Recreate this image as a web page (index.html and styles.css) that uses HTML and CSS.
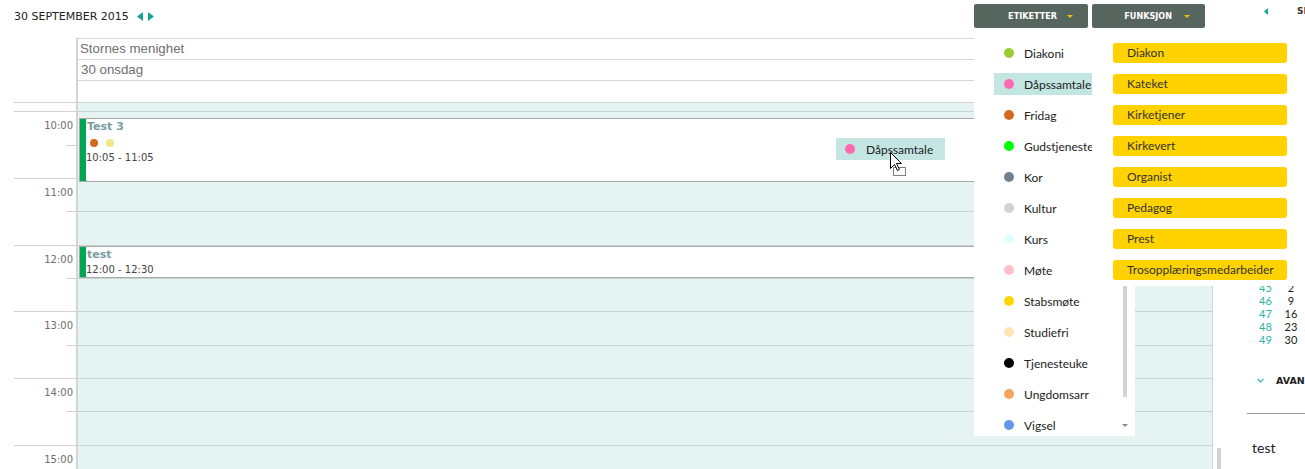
FILE: index.html
```html
<!DOCTYPE html>
<html lang="no">
<head>
<meta charset="utf-8">
<title>Kalender – Stornes menighet</title>
<link rel="stylesheet" href="styles.css">
</head>
<body>
<div class="app">
  <main class="main">
    <header class="toolbar">
      <div class="title">
        <span class="date">30 SEPTEMBER 2015</span>
        <span class="nav">
          <svg width="6" height="9" viewBox="0 0 6 9"><path d="M6 0V9L0 4.5Z"/></svg>
          <svg width="6" height="9" viewBox="0 0 6 9"><path d="M0 0V9L6 4.5Z"/></svg>
        </span>
      </div>
      <div class="menus">
        <button class="menu-btn">ETIKETTER <span class="caret"></span></button>
        <button class="menu-btn second">FUNKSJON <span class="caret"></span></button>

        <div class="menu-panel tags-panel">
          <div class="tag-item"><i class="dot c-yellowgreen"></i>Diakoni</div>
          <div class="tag-item active"><i class="dot c-hotpink"></i>Dåpssamtale</div>
          <div class="tag-item"><i class="dot c-chocolate"></i>Fridag</div>
          <div class="tag-item"><i class="dot c-lime"></i>Gudstjeneste</div>
          <div class="tag-item"><i class="dot c-slategray"></i>Kor</div>
          <div class="tag-item"><i class="dot c-lightgray"></i>Kultur</div>
          <div class="tag-item"><i class="dot c-lightcyan"></i>Kurs</div>
          <div class="tag-item"><i class="dot c-pink"></i>Møte</div>
          <div class="tag-item"><i class="dot c-gold"></i>Stabsmøte</div>
          <div class="tag-item"><i class="dot c-moccasin"></i>Studiefri</div>
          <div class="tag-item"><i class="dot c-black"></i>Tjenesteuke</div>
          <div class="tag-item"><i class="dot c-sandybrown"></i>Ungdomsarr</div>
          <div class="tag-item"><i class="dot c-cornflower"></i>Vigsel</div>
          <div class="tags-scroll"></div>
          <div class="tags-down"></div>
        </div>

        <div class="menu-panel func-panel">
          <div class="role">Diakon</div>
          <div class="role">Kateket</div>
          <div class="role">Kirketjener</div>
          <div class="role">Kirkevert</div>
          <div class="role">Organist</div>
          <div class="role">Pedagog</div>
          <div class="role">Prest</div>
          <div class="role">Trosopplæringsmedarbeider</div>
        </div>
      </div>
    </header>

    <div class="cal">
      <div class="times">
        <div class="times-head"></div>
        <div class="slots">
          <div class="t-slot"></div>
          <div class="t-slot">10:00</div>
          <div class="t-slot half"></div>
          <div class="t-slot">11:00</div>
          <div class="t-slot half"></div>
          <div class="t-slot">12:00</div>
          <div class="t-slot half"></div>
          <div class="t-slot">13:00</div>
          <div class="t-slot half"></div>
          <div class="t-slot">14:00</div>
          <div class="t-slot half"></div>
          <div class="t-slot">15:00</div>
        </div>
      </div>

      <div class="day">
        <div class="day-head">
          <div class="dh-row">Stornes menighet</div>
          <div class="dh-row date-row">30 onsdag</div>
          <div class="dh-row blank"></div>
        </div>
        <div class="day-body slots">
          <div class="d-slot first"></div>
          <div class="d-slot"></div>
          <div class="d-slot"></div>
          <div class="d-slot"></div>
          <div class="d-slot"></div>
          <div class="d-slot"></div>
          <div class="d-slot"></div>
          <div class="d-slot"></div>
          <div class="d-slot"></div>
          <div class="d-slot"></div>
          <div class="d-slot"></div>
          <div class="d-slot"></div>

          <div class="event" style="top:16px;height:64px">
            <span class="bar"></span>
            <div class="ev-body">
              <div class="ev-title">Test 3</div>
              <div class="ev-dots"><i class="c-chocolate"></i><i class="c-khaki"></i></div>
              <div class="ev-time">10:05 - 11:05</div>
            </div>
          </div>

          <div class="event short" style="top:144px;height:32px">
            <span class="bar"></span>
            <div class="ev-body">
              <div class="ev-title">test</div>
              <div class="ev-time">12:00 - 12:30</div>
            </div>
          </div>

          <div class="ghost"><i class="dot c-hotpink"></i>Dåpssamtale</div>
          <svg class="cursor" width="18" height="26" viewBox="0 0 18 26">
            <rect x="3.5" y="15.5" width="12" height="8" fill="#fff" stroke="#000" stroke-dasharray="1 1"/>
            <path d="M0.5 0.5V16.5L4.5 12.5L7.5 18.5L9.5 17.5L6.5 11.5H11.5Z" fill="#fff" stroke="#000" stroke-linejoin="round"/>
          </svg>
        </div>
      </div>
    </div>
  </main>

  <aside class="side">
    <div class="side-head">
      <svg width="4" height="7" viewBox="0 0 4 7"><path d="M4 0V7L0 3.5Z"/></svg>
      <b>SEPTEMBER 2015</b>
    </div>

    <div class="month first">
      <table>
        <tr class="wd"><td class="wk"></td><td>M</td><td>T</td><td>O</td><td>T</td><td>F</td><td>L</td><td>S</td></tr>
        <tr><td class="wk">36</td><td>31</td><td>1</td><td>2</td><td>3</td><td>4</td><td>5</td><td>6</td></tr>
        <tr><td class="wk">37</td><td>7</td><td>8</td><td>9</td><td>10</td><td>11</td><td>12</td><td>13</td></tr>
        <tr><td class="wk">38</td><td>14</td><td>15</td><td>16</td><td>17</td><td>18</td><td>19</td><td>20</td></tr>
        <tr><td class="wk">39</td><td>21</td><td>22</td><td>23</td><td>24</td><td>25</td><td>26</td><td>27</td></tr>
        <tr><td class="wk">40</td><td>28</td><td>29</td><td>30</td><td>1</td><td>2</td><td>3</td><td>4</td></tr>
      </table>
    </div>
    <div class="month">
      <div class="m-title">OKTOBER 2015</div>
      <table>
        <tr class="wd"><td class="wk"></td><td>M</td><td>T</td><td>O</td><td>T</td><td>F</td><td>L</td><td>S</td></tr>
        <tr><td class="wk">40</td><td>28</td><td>29</td><td>30</td><td>1</td><td>2</td><td>3</td><td>4</td></tr>
        <tr><td class="wk">41</td><td>5</td><td>6</td><td>7</td><td>8</td><td>9</td><td>10</td><td>11</td></tr>
        <tr><td class="wk">42</td><td>12</td><td>13</td><td>14</td><td>15</td><td>16</td><td>17</td><td>18</td></tr>
        <tr><td class="wk">43</td><td>19</td><td>20</td><td>21</td><td>22</td><td>23</td><td>24</td><td>25</td></tr>
        <tr><td class="wk">44</td><td>26</td><td>27</td><td>28</td><td>29</td><td>30</td><td>31</td><td>1</td></tr>
      </table>
    </div>
    <div class="month">
      <div class="m-title">NOVEMBER 2015</div>
      <table>
        <tr class="wd"><td class="wk"></td><td>M</td><td>T</td><td>O</td><td>T</td><td>F</td><td>L</td><td>S</td></tr>
        <tr><td class="wk">44</td><td>26</td><td>27</td><td>28</td><td>29</td><td>30</td><td>31</td><td>1</td></tr>
        <tr><td class="wk">45</td><td>2</td><td>3</td><td>4</td><td>5</td><td>6</td><td>7</td><td>8</td></tr>
        <tr><td class="wk">46</td><td>9</td><td>10</td><td>11</td><td>12</td><td>13</td><td>14</td><td>15</td></tr>
        <tr><td class="wk">47</td><td>16</td><td>17</td><td>18</td><td>19</td><td>20</td><td>21</td><td>22</td></tr>
        <tr><td class="wk">48</td><td>23</td><td>24</td><td>25</td><td>26</td><td>27</td><td>28</td><td>29</td></tr>
        <tr><td class="wk">49</td><td>30</td><td>1</td><td>2</td><td>3</td><td>4</td><td>5</td><td>6</td></tr>
      </table>
    </div>

    <section class="adv">
      <div class="adv-head">
        <svg width="7" height="5" viewBox="0 0 7 5"><path d="M0.5 0.8L3.5 3.8L6.5 0.8" fill="none" stroke="#2fb0a6" stroke-width="1.2"/></svg>
        <b>AVANSERT</b>
      </div>
    </section>
    <div class="note">test</div>
    <div class="side-scroll"></div>
  </aside>
</div>
</body>
</html>
```

FILE: styles.css
```css
* { box-sizing: border-box; margin: 0; padding: 0; }

body {
  width: 1305px;
  height: 469px;
  overflow: hidden;
  background: #fff;
  color: #222;
  font-family: "DejaVu Sans", Verdana, sans-serif;
  font-size: 11px;
}

.app { display: flex; height: 469px; }

/* ---------- main column ---------- */
.main {
  width: 1213px;
  flex: none;
  display: flex;
  flex-direction: column;
}

.toolbar {
  height: 38px;
  flex: none;
  display: flex;
  justify-content: space-between;
  align-items: flex-start;
  padding: 4px 8px 0 14px;
  position: relative;
  z-index: 5;
}

.title { display: flex; align-items: center; gap: 8px; height: 24px; }
.date { font-size: 11px; color: #222; }
.nav { display: flex; align-items: center; gap: 5px; }
.nav svg { display: block; fill: #17a493; }

.menus { display: flex; gap: 4px; position: relative; }

.menu-btn {
  width: 114px;
  height: 24px;
  border: 0;
  border-radius: 2px;
  background: #57655f;
  color: #fff;
  font-family: "DejaVu Sans Condensed", "DejaVu Sans", sans-serif;
  font-stretch: condensed;
  font-weight: bold;
  font-size: 9px;
  display: flex;
  align-items: center;
  justify-content: flex-end;
  gap: 10px;
  padding-right: 15px;
}
.menu-btn.second { width: 113px; gap: 12px; }

.caret {
  width: 0;
  height: 0;
  border-left: 3px solid transparent;
  border-right: 3px solid transparent;
  border-top: 3px solid #f1c400;
}

/* dropdown panels */
.menu-panel {
  position: absolute;
  top: 27px;
  background: #fff;
  overflow: hidden;
}

.tags-panel {
  left: 0;
  width: 161px;
  height: 405px;
  padding-top: 11px;
  z-index: 1;
}

.tag-item {
  display: flex;
  align-items: center;
  gap: 10px;
  width: fit-content;
  height: 22px;
  margin: 0 0 9px 20px;
  padding: 0 1px 0 10px;
  font-family: Lato, "Liberation Sans", sans-serif;
  font-size: 12px;
  color: #222;
}
.tag-item.active { background: #c3e6e3; }

.dot {
  width: 10px;
  height: 10px;
  border-radius: 50%;
  flex: none;
}

.tags-scroll {
  position: absolute;
  left: 149px;
  top: 9px;
  width: 4px;
  height: 357px;
  background: #d3d3d3;
}
.tags-down {
  position: absolute;
  left: 148px;
  top: 393px;
  width: 0;
  height: 0;
  border-left: 3px solid transparent;
  border-right: 3px solid transparent;
  border-top: 3px solid #8a8a8a;
}

.func-panel {
  left: 118px;
  width: 213px;
  height: 255px;
  padding: 12px 0 0 21px;
  z-index: 2;
}

.role {
  width: 174px;
  height: 20px;
  line-height: 20px;
  margin-bottom: 11px;
  padding-left: 14px;
  background: #ffd200;
  border-radius: 3px;
  font-family: Lato, "Liberation Sans", sans-serif;
  font-size: 12px;
  color: #333;
  white-space: nowrap;
}

/* colours */
.c-yellowgreen { background: #9acd32; }
.c-hotpink { background: #ff69b4; }
.c-chocolate { background: #d2691e; }
.c-lime { background: #00ff00; }
.c-slategray { background: #708090; }
.c-lightgray { background: #d3d3d3; }
.c-lightcyan { background: #e0ffff; }
.c-pink { background: #ffc0cb; }
.c-gold { background: #ffd700; }
.c-moccasin { background: #ffe4b5; }
.c-black { background: #000; }
.c-sandybrown { background: #f4a460; }
.c-cornflower { background: #6495ed; }
.c-khaki { background: #f0e68c; }

/* ---------- calendar ---------- */
.cal { flex: 1; display: flex; overflow: hidden; }

.slots {
  display: grid;
  grid-template-rows: 9px 34px 33px 33px 34px 33px 33px 34px 33px 33px 34px 33px;
}

.times { width: 76px; flex: none; }
.times-head { height: 64px; }

.t-slot {
  border-top: 1px solid #d3d3d3;
  margin-left: 14px;
  padding: 8px 3px 0 0;
  text-align: right;
  font-size: 10px;
  line-height: 12px;
  color: #6e6e6e;
}
.t-slot.half { margin-left: 66px; }

.day {
  flex: 1;
  display: flex;
  flex-direction: column;
  border-left: 2px solid #d4d4d4;
  border-right: 1px solid #d4d4d4;
}

.day-head {
  flex: none;
  border-top: 1px solid #d6d6d6;
  font-family: "Liberation Sans", Arial, sans-serif;
  font-size: 13.3px;
  color: #6f6f6f;
}
.dh-row {
  height: 21px;
  line-height: 20px;
  padding-left: 2px;
  border-bottom: 1px solid #d6d6d6;
}
.dh-row.date-row { padding-left: 3px; }
.dh-row.blank { border-bottom: 0; }

.day-body {
  position: relative;
  flex: 1;
  background: #e5f4f3;
}
.d-slot { border-top: 1px solid #c9d5d5; }
.d-slot.first { border-top-color: #d3d3d3; }

.event {
  position: absolute;
  left: 1px;
  right: 1px;
  display: flex;
  background: #fff;
  border: 1px solid #a9a9a9;
}
.event .bar { width: 6px; flex: none; background: #00a651; }
.ev-body { padding: 1px 0 0 1px; }
.ev-title {
  font-weight: bold;
  font-size: 11px;
  line-height: 14px;
  color: #7b9ca2;
}
.ev-dots { display: flex; gap: 8px; margin: 5px 0 0 3px; }
.ev-dots i { width: 8px; height: 8px; border-radius: 50%; }
.ev-time {
  margin: 5px 0 0 -1px;
  font-size: 10px;
  line-height: 12px;
  color: #444;
}
.event.short .ev-time { margin-top: 2px; }

.ghost {
  position: absolute;
  left: 758px;
  top: 36px;
  width: 109px;
  height: 22px;
  display: flex;
  align-items: center;
  gap: 11px;
  padding-left: 9px;
  background: #c3e6e3;
  font-family: Lato, "Liberation Sans", sans-serif;
  font-size: 12px;
  color: #222;
}

.cursor { position: absolute; left: 812px; top: 50px; }

/* ---------- sidebar ---------- */
.side {
  width: 92px;
  flex: none;
  overflow: hidden;
  position: relative;
  font-family: Lato, "Liberation Sans", sans-serif;
}

.side-head {
  height: 22px;
  display: flex;
  align-items: center;
  gap: 29px;
  padding-left: 51px;
  white-space: nowrap;
}
.side-head svg { flex: none; fill: #17a493; }
.side-head b {
  font-family: "DejaVu Sans", sans-serif;
  font-size: 9px;
  color: #333;
}

.month { margin-top: 17px; padding-left: 46px; }
.month table {
  border-collapse: collapse;
  table-layout: fixed;
  width: 162px;
  font-size: 11px;
  line-height: 13px;
}
.month td {
  width: 20px;
  height: 13px;
  padding: 0;
  text-align: center;
  color: #222;
}
.month td.wk { width: 22px; text-align: left; color: #2fb0a6; }
.m-title {
  height: 13px;
  line-height: 13px;
  font-size: 9px;
  font-weight: bold;
  white-space: nowrap;
}

.adv {
  margin: 27px 0 0 34px;
  padding: 0 0 26px 10px;
  border-bottom: 1px solid #9a9a9a;
}
.adv-head {
  display: flex;
  align-items: center;
  gap: 12px;
  height: 14px;
  white-space: nowrap;
}
.adv-head svg { flex: none; }
.adv-head b {
  font-family: "DejaVu Sans", sans-serif;
  font-size: 9.5px;
  color: #222;
}

.note {
  margin-top: 25px;
  padding-left: 39px;
  font-size: 14px;
  line-height: 18px;
  color: #222;
}

.side-scroll {
  position: absolute;
  left: 4px;
  top: 448px;
  width: 4px;
  height: 30px;
  background: #d3d3d3;
}
```
